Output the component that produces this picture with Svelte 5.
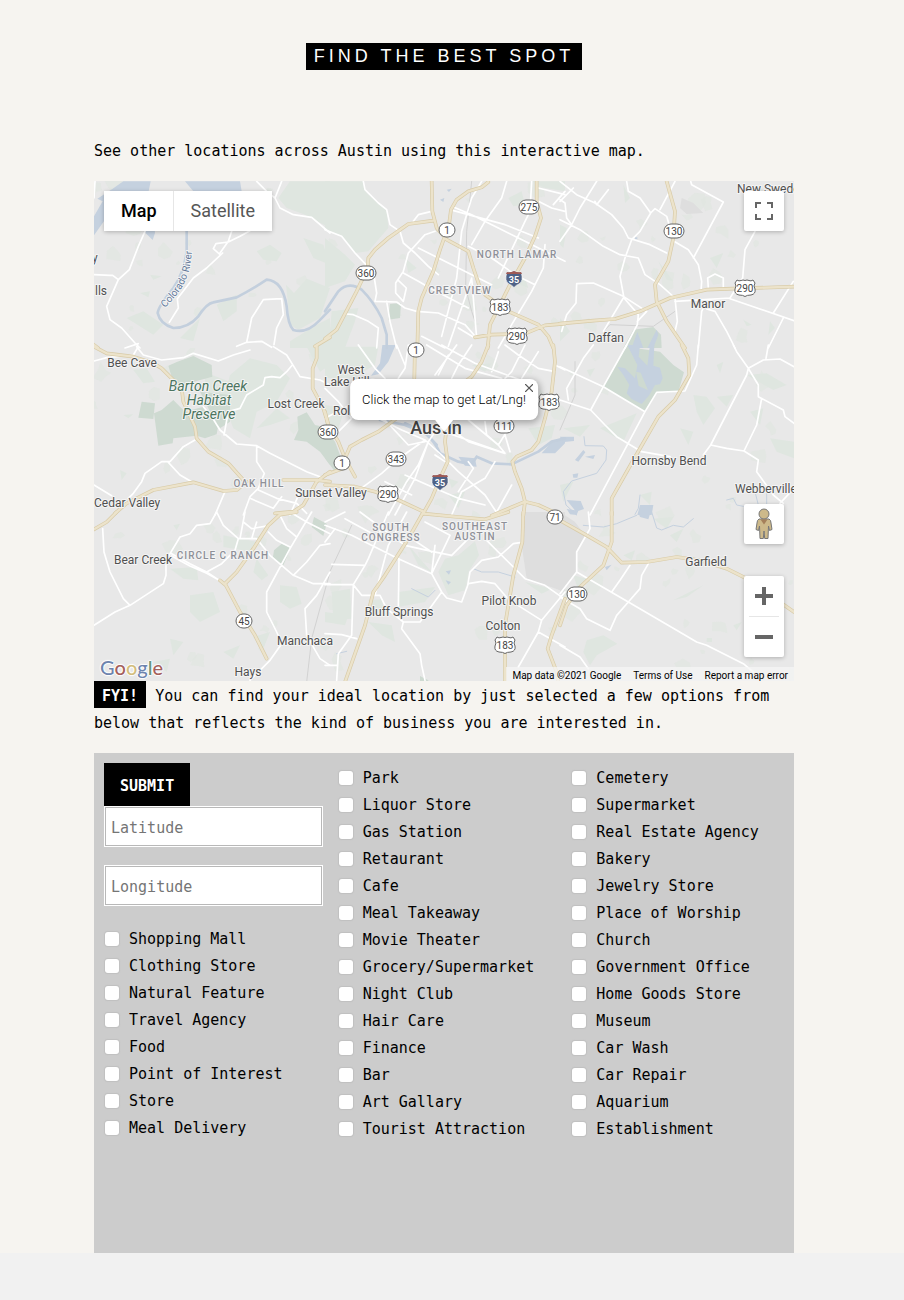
<script>
  // Map geometry, drawn in sectors; each sector has its own origin (3 units per pixel).
  const sectors = [
    {
      x: -12, y: -9,
      pale: 'M565 60L600 10H720V150L640 108L590 90ZM500 220L540 200L575 225L560 250L520 245ZM380 380L440 350L440 400L400 430ZM110 420L160 400L220 440L190 470ZM640 180L700 200L720 260L670 240ZM270 480L330 420L310 490ZM600 490L680 440L720 420V510H600ZM150 345L180 340L175 358ZM180 290L215 295L190 305ZM588 320L612 345L650 302L720 330L690 420L625 455L600 440Z',
      water: 'M12 115L38 70L22 62L68 32L100 10H182L172 60L204 70L188 100L195 165L188 186L160 158L120 118L70 112L45 125L12 172ZM285 10H450L455 40H310Z',
      river: 'M290 160V220Q282 285 250 330Q205 385 203 405Q210 438 250 450Q295 450 325 415Q350 376 370 373L440 358Q490 332 530 305Q578 308 590 385Q594 440 610 456Q650 468 688 428L720 395',
      white: 'M165 160L145 205L118 275L85 305L50 385L60 425L95 450L135 495L150 510M12 290L60 292L68 292L85 305M575 10L555 60M500 10L530 40L555 60L570 90L610 110L665 118L720 165M425 160L415 190L388 228L370 212L378 197L415 192L450 175L480 158M398 225L350 270L310 300L262 362L265 390L238 433M575 362L520 365L485 420L470 493L515 490L545 508M575 362L580 410L560 450L552 500M440 505L470 493M12 60L15 10M105 510L145 497',
      yellow: 'M8 498L24 510M675 505L720 478'
    },
    {
      x: 693, y: -9,
      pale: 'M0 10H115L125 45L185 95L190 150L130 220L90 225L50 175L0 155ZM0 180L60 230L90 260L60 310L0 330ZM240 240L275 270L250 285ZM550 60L590 40L600 80L565 85ZM20 400L100 390L90 430L60 510H10ZM620 10H720V40L660 30ZM560 310L600 300L610 330Z',
      green: 'M195 378L228 375L225 420L190 425Z',
      water: 'M345 65L358 60L355 72ZM365 35L380 32L372 42Z',
      river: 'M0 400L40 340Q70 308 110 335Q145 370 170 420L185 470V510',
      white: 'M115 10L120 35L160 75L185 95L195 140L225 160L235 195L270 225L310 265L340 290M265 130L280 110L320 100M0 155L50 175L90 225L125 262M148 300L155 345L150 370L215 372L240 390L275 400M275 400L340 405L420 440L455 480M330 160L300 170L250 225L235 280L212 315L212 345L235 370L244 330L220 307M235 285L280 310L315 330M280 210L340 240L400 270L500 320M350 475L395 300L410 160L440 60L470 10M370 505L420 360L440 300M440 200L480 130L530 60L545 10M520 300L600 130L615 100L620 10M380 85L440 110L520 150L600 190L720 250M430 205L500 240L570 290L630 320M660 200L655 270L620 340L560 440L520 510M640 70L680 90L720 100M640 30L720 50M685 80L720 40M375 95L460 118L540 140L640 180M185 370L195 430L215 510M65 408L85 410L130 430L160 450L155 510M290 475L360 510M400 450L450 480M440 300L455 480M315 330L430 390',
      yellow: 'M320 10L322 100L335 150L365 185L430 220L445 270L462 320L480 350L550 400L640 440L670 475L685 510M490 12L470 28L430 40L395 65L378 95L372 140L345 215L325 280L290 360L280 400L277 510M325 128L250 138L190 180L150 215L130 240L128 270L95 340L35 455L0 482M635 10L635 70L648 120L630 175L600 240L555 320L510 410L495 440L488 510M450 478L500 470L600 467L660 442L720 437',
      rail: 'M440 10L425 160L422 330L440 400L450 430'
    },
    {
      x: 1398, y: -9,
      pale: 'M190 20L210 60L195 75ZM295 250L340 310L320 305ZM450 240L490 225L470 270ZM0 140L20 150L10 210L0 200ZM550 425L575 440L560 445ZM0 420L30 460L0 490ZM630 430L645 450L625 470Z',
      green: 'M220 455L280 447L303 470L305 510H190Z',
      water: 'M232 462L250 510H215ZM290 455L295 470L280 510H262Z M225 178H232V184H225Z',
      white: 'M0 10L50 50L105 75L155 110L190 150L205 180L270 200L320 225M110 10L60 90L35 140L0 190M0 125L60 155L130 205L180 230L235 240L255 290L300 320L345 360L352 430L345 460M0 65L15 75L20 120L35 140M200 10L205 40L240 60L272 105L240 160L215 185L195 240L180 295L192 360L235 410L232 440L195 510M145 35L110 80L105 70M345 10L300 95M40 30L0 70M272 105L285 92L320 115L342 190L385 215L415 260L425 310L423 340M400 240L490 72L395 20L392 10M445 330L443 300L465 288L490 300L490 330M585 160L555 215L548 300L510 360L345 370M510 362L702 428M700 310L640 405M670 420L625 510M440 370L425 400L415 510M440 393L465 400L500 460L525 510M50 317L100 315L190 355L260 400L232 430M50 317L48 375L20 410L5 460M190 360L130 460',
      yellow: 'M320 10L345 100L340 180L325 250L285 320L290 370L320 430L375 510M0 437L100 428L165 423L240 400L330 360L440 335L520 332L702 326',
      rail: 'M130 460L150 440L280 445L345 400',
      gray: 'M365 60L400 75L430 105L380 108L360 90Z'
    },
    {
      x: -12, y: 492,
      pale: 'M130 75L170 70L195 110L160 115ZM420 90L480 40L560 60L600 100L560 170L500 200L480 280L430 250L400 170ZM90 375L110 385L95 405ZM100 210L130 208L115 220ZM340 80L420 110L450 150L410 190L360 180ZM650 5L720 5V60L690 80Z M500 250L560 190L600 220L540 240Z',
      green: 'M192 205L215 195L250 165L285 200L340 185L385 240L380 268L345 280L320 272L250 280L248 295L205 302ZM155 170L195 175L190 222L145 218ZM235 62L262 50L310 33L365 60L367 95L320 108L270 128L245 95ZM330 140L420 150L420 230L390 250L360 200ZM622 215L650 202L675 240L720 250V360L690 320L650 290L612 285L625 255Z',
      white: 'M12 48L50 38L130 30L145 5M140 5L160 30L215 45L280 38L310 25L385 48L430 30L480 15M550 5L590 30L615 70L630 95L690 105L720 120M605 62L590 80L570 98L545 95L525 98L520 120L470 150L450 190L415 200L402 270M340 185L365 215L390 255L440 297L500 302L540 325L650 380L690 395M500 302L500 350L523 385L505 430L480 455L460 510M315 285L280 305L240 350L215 350L165 385L155 410L130 445L115 460M235 352L270 390L305 410M12 420L65 452M405 440L375 510M505 435L560 460L620 475L650 505M480 460L550 490L575 455M630 440L600 510',
      yellow: 'M12 5L50 25L130 35L190 55L215 70L275 130L280 170L315 245L320 280L355 320L415 355L460 405M75 505L110 475L190 435L310 412L400 438L440 435L470 410M580 405L680 405L720 410M720 380L680 410L640 480L610 500L555 505M680 5L680 40L668 70L668 130L700 190L715 240'
    },
    {
      x: 693, y: 492,
      pale: 'M0 5L160 5L150 60L80 100L0 100ZM0 180L60 190L40 250L0 270ZM440 60L500 55L480 80ZM370 400L400 410L380 430ZM610 250L690 240L680 280L640 300ZM370 450L420 440L400 490Z',
      green: 'M0 250L30 290L60 370L30 380L0 340Z',
      water: 'M172 0H212L190 50L160 88L138 92L165 55ZM400 335L450 340L455 365L420 362ZM650 325L680 290L720 282V295L690 325Z',
      river: 'M165 225L240 240L300 265Q330 290 345 325L400 350L440 358L455 335M455 335L500 355L560 358L640 320L680 290L720 280M240 235L300 262L335 300',
      white: 'M350 0L395 25L450 55L600 110M305 0L420 70L530 100M395 0L330 90M440 0L400 60L380 100M540 0L580 30L640 70L690 80M600 0L560 80L540 100M250 0L240 70L220 100M640 20L590 100M215 0L240 60M690 60L720 75M160 220L230 255L300 285L350 330L400 380L480 450L520 510M375 250L430 290L540 325M480 230L485 270L520 300L540 325M540 270L555 320M370 265L540 325M430 225L520 300L545 260M340 245L310 290L280 360L245 410L190 510M300 285L215 345L170 385L95 440M310 290L270 400L210 510M240 390L330 430L400 460L480 480M510 350L480 400L410 440L380 510M360 350L330 330M430 350L445 370L400 440M560 420L510 510M180 410L260 450M0 130L40 170L80 220L20 280M100 0L150 70L180 100M0 220L75 180M180 225L250 300L300 290M340 90L370 30M500 80L520 20',
      yellow: 'M270 0L268 100M490 0L470 50L440 95L420 110M685 0L690 50L680 140L660 220L640 290L620 315L575 335L562 350L570 380L590 430L600 470L595 510M215 220L160 260L110 285L75 305L60 340M60 340L55 370L0 390M0 420L90 425L150 440L220 465L295 500M0 200L10 240L40 290L60 340L90 395M365 245L360 290L368 350L345 400L320 460L295 505M500 512L600 470L640 480L705 510'
    },
    {
      x: 1398, y: 492,
      pale: 'M400 150L440 155L465 190L430 240L410 200ZM470 155L520 150L500 185ZM560 90L620 85L680 120L640 135ZM570 200L610 190L600 240ZM630 280L702 290V340L650 320ZM360 250L400 260L385 300ZM10 250L90 240L60 275ZM470 60L490 50L480 85ZM80 75L105 70L90 95ZM240 450L275 440L270 480ZM0 420L40 410L10 470ZM120 250L230 205L190 290Z',
      green: 'M200 5L300 20L340 60L372 82L355 140L290 145L255 200L130 125L190 20Z',
      water: 'M202 0H240L236 35L262 62L270 0H283L280 62L300 68L308 100L300 118L285 120L268 150L245 177L215 162L200 145L208 120L190 90L172 65L195 70L225 100L232 60ZM20 465L62 468L72 492L48 500ZM0 275H42V288L5 292ZM45 345L70 315L76 322L55 350ZM240 480H280L275 510H232ZM38 388L55 385L52 398L40 398ZM75 335L105 330L100 342ZM20 492L55 497L50 510L30 508Z',
      river2: 'M72 275L75 302L130 303L140 315L138 345L110 385L35 408L10 440L18 480L50 510M240 450L235 490L225 508M500 465L520 460L530 480L550 484M585 440L595 480L620 482V440',
      white: 'M415 0L410 60L375 138L290 142L255 200L90 510M0 65L130 125L255 200M200 0L130 125L92 195M0 165L92 195L135 240L170 275L245 320L330 335M430 330L452 300L560 90L565 70L530 20L520 0M565 70L595 120L595 155L670 195L675 215L702 235M565 70L610 45L660 42L702 65M625 0L618 40M605 160L590 240L552 318L500 310L452 300M552 318L595 345L590 380L640 450L670 475M660 475L702 430M100 0L70 40L20 130L25 165',
      yellow: 'M365 0L385 40L388 90L345 165L295 215L220 345L155 460L155 510',
      rail: 'M45 50L45 150L0 255'
    },
    {
      x: -12, y: 993,
      pale: 'M240 170L320 165L325 205L280 200ZM250 40L270 35L260 55ZM400 70L500 90L490 120L400 105ZM500 140L535 190L515 205L490 180ZM400 420L450 400L430 440ZM300 250L370 240L390 300L330 330L300 300ZM570 220L620 225L635 275L600 290L570 270ZM240 380L280 390L250 430ZM190 450L240 440L230 480ZM490 375L540 360L520 410Z',
      green: 'M552 115L575 95L602 108L580 160L548 140ZM665 45L672 15L710 35L700 72Z',
      white: 'M38 50L42 120L60 180L100 260L120 280L75 300L12 340M120 280L220 215L228 190L228 145L270 75L300 65L320 40L360 35L380 0M245 125L300 155L350 180L388 205M245 132L300 162L350 184L388 205M380 0L400 40L445 80L500 80L540 130L610 190L670 215L720 215M445 80L435 115L395 155L350 180M465 0L450 80M460 30L485 50L540 40M500 30L485 80M665 0L600 110L530 240L530 300L560 360L575 395L540 445L480 505M720 95L690 100L650 150L610 190M720 180L680 250L645 290L650 370L690 440L720 460M570 10L590 50L620 75M535 60L560 85L600 105M600 0L650 30L720 65',
      yellow: 'M12 52L50 30L80 0M620 0L570 8L535 40L490 110L440 180L405 215L450 300L470 330L495 370L530 440M390 205L405 218',
      rail: 'M720 180L665 380L650 510'
    },
    {
      x: 693, y: 993,
      gray: 'M600 0H720V240L650 215L605 200L590 100Z',
      pale: 'M250 100L320 180L280 160ZM130 330L200 340L210 390L170 370ZM0 300L70 310L60 340L0 330ZM600 210L680 230L650 245ZM130 265L170 262L180 310L140 300ZM220 240L330 225L300 270L220 285ZM360 140L400 130L450 88L462 130L430 180L420 235L370 250L340 180ZM20 240L75 230L80 320L25 325Z',
      green: 'M285 492L310 505V515H285Z',
      water: 'M362 178L378 175L372 188ZM362 205L378 210L370 218Z',
      river2: 'M445 170L470 180L520 180L570 195M260 230L310 255L330 235M35 425L65 418',
      white: 'M0 40L80 70L220 140L320 185L350 240L365 258L410 270L430 215L470 208L510 215L550 262L650 325L640 360L580 465M650 325L720 240M640 360L720 405M0 90L30 50M105 0L240 100L320 118L380 130L430 80M60 20L170 80M330 100L320 185L375 70L300 30M245 0L190 100L150 250M190 0L130 140L120 160L20 157M120 160L85 218L0 218M85 218L80 370L40 425L35 505M85 218L110 250L165 250L185 290L235 330L285 330L350 240M222 140L220 290M235 330L230 350L285 425L290 460L300 505M585 92L565 95L520 135L470 145L435 180L428 220M485 85L600 200L660 220L720 262M0 460L35 460M0 365L50 368L95 380M0 30L60 0M260 80L320 120',
      yellow: 'M295 0L250 80L180 190L145 240L120 340L60 510M295 5L400 15L480 22L550 0M595 0L592 90L565 190L540 340L540 510M720 260L680 370L668 410L695 480L700 510',
      rail: 'M0 210L80 40'
    },
    {
      x: 1398, y: 993,
      gray: 'M0 0L45 30L75 70L48 120L50 180L0 240Z',
      pale: 'M190 130L225 115L215 145ZM340 265L430 220L380 255ZM80 385L130 370L172 395L110 430L90 460L70 420ZM440 378H456V390H440ZM520 340L545 330L530 355ZM330 70L370 50L350 90ZM40 190L80 200L60 250ZM280 20L340 15L320 50Z',
      water: 'M235 0H272L265 22L240 15ZM135 165L155 158L140 175Z',
      river2: 'M70 40L130 45L170 35L230 10M275 0L290 48L305 54L340 40L370 45L400 20',
      white: 'M85 0L90 50L50 120L50 180L0 245M50 180L205 270L350 355L410 390L440 400L550 455L580 480M210 160L180 205L155 240M265 155L245 190L240 230L205 270L170 310L150 355L80 320L60 290L0 255M0 400L60 435L85 470',
      yellow: 'M0 25L80 70L140 105L185 152L260 150L350 135L420 145L500 170L560 200L702 300M155 0L155 90L130 160L60 225L20 280L0 340'
    }
  ];

  // Scattered vegetation patches.
  let seed = 11;
  const rnd = () => (seed = (seed * 16807) % 2147483647) / 2147483647;
  const patches = Array.from({ length: 170 }, () => {
    const x = Math.round(rnd() * 2100);
    const y = Math.round(rnd() * 1500);
    const r = 8 + rnd() * 24;
    const pts = Array.from({ length: 7 }, (_, i) => {
      const a = (i / 7) * Math.PI * 2;
      const d = r * (0.35 + rnd() * 0.9);
      return `${Math.round(x + Math.cos(a) * d)},${Math.round(y + Math.sin(a) * d)}`;
    });
    return pts.join(' ');
  });

  const places = [
    ['New Swede', 737, 193, 'start'], ['y', 92, 262, 'start'], ['lls', 95, 295, 'start'],
    ['Manor', 708, 308], ['Daffan', 606, 342], ['Bee Cave', 132, 367], ['West', 351, 374],
    ['Lake Hills', 324, 386, 'start'], ['Lost Creek', 296, 408], ['Rollingwood', 333, 415, 'start'],
    ['Hornsby Bend', 669, 465], ['Webberville', 735, 493, 'start'], ['Cedar Valley', 94, 507, 'start'],
    ['Sunset Valley', 331, 497], ['Bear Creek', 143, 564], ['Garfield', 706, 566],
    ['Pilot Knob', 509, 605], ['Colton', 503, 630], ['Bluff Springs', 399, 616],
    ['Manchaca', 305, 645], ['Hays', 248, 676]
  ];
  const districts = [
    ['NORTH LAMAR', 517, 258], ['CRESTVIEW', 460, 294], ['OAK HILL', 259, 487],
    ['CIRCLE C RANCH', 223, 559], ['SOUTH', 391, 531], ['CONGRESS', 391, 541],
    ['SOUTHEAST', 475, 530], ['AUSTIN', 475, 540]
  ];
  const stateShields = [
    ['275', 529, 207], ['1', 447, 230], ['130', 674, 231], ['360', 366, 273], ['1', 416, 350],
    ['360', 328, 432], ['1', 342, 463], ['343', 396, 459], ['111', 504, 426], ['71', 555, 517],
    ['130', 577, 594], ['45', 244, 621]
  ];
  const usShields = [
    ['183', 500, 307], ['290', 517, 336], ['290', 745, 288], ['183', 549, 402],
    ['290', 388, 494], ['183', 505, 645]
  ];
  const interstates = [[514, 279], [440, 482]];

  const columns = [
    ['Shopping Mall', 'Clothing Store', 'Natural Feature', 'Travel Agency', 'Food', 'Point of Interest', 'Store', 'Meal Delivery'],
    ['Park', 'Liquor Store', 'Gas Station', 'Retaurant', 'Cafe', 'Meal Takeaway', 'Movie Theater', 'Grocery/Supermarket', 'Night Club', 'Hair Care', 'Finance', 'Bar', 'Art Gallary', 'Tourist Attraction'],
    ['Cemetery', 'Supermarket', 'Real Estate Agency', 'Bakery', 'Jewelry Store', 'Place of Worship', 'Church', 'Government Office', 'Home Goods Store', 'Museum', 'Car Wash', 'Car Repair', 'Aquarium', 'Establishment']
  ];
</script>

{#snippet layer(key)}
  <g class={key}>
    {#each sectors as s}
      {#if s[key]}<path d={s[key]} transform={`translate(${s.x} ${s.y})`} />{/if}
    {/each}
  </g>
{/snippet}

{#snippet options(list)}
  {#each list as name}
    <label class="option"><input type="checkbox" {name} />{name}</label>
  {/each}
{/snippet}

<main>
  <div class="content">
    <h1><span>FIND THE BEST SPOT</span></h1>

    <p>See other locations across Austin using this interactive map.</p>

    <div class="map">
      <svg class="canvas" viewBox="0 0 2100 1500" preserveAspectRatio="xMidYMid slice" role="img" aria-label="Austin">
        <rect width="2100" height="1500" fill="#e8e8e8" />
        <g class="pale">
          {#each patches as points}<polygon {points} opacity="0.6" />{/each}
        </g>
        {@render layer('gray')}
        {@render layer('pale')}
        {@render layer('green')}
        {@render layer('water')}
        <path class="isle" d="M1626 572L1640 575L1662 628L1634 615Z" />
        {@render layer('river')}
        {@render layer('river2')}
        {@render layer('rail')}
        {@render layer('white')}
        <g class="casing">
          {#each sectors as s}<path d={s.yellow} transform={`translate(${s.x} ${s.y})`} />{/each}
        </g>
        {@render layer('yellow')}

        <g transform="scale(3) translate(-94 -181)">
          <g class="place">
            {#each places as [name, x, y, anchor]}
              <text {x} {y} text-anchor={anchor ?? 'middle'}>{name}</text>
            {/each}
          </g>
          <g class="district">
            {#each districts as [name, x, y]}<text {x} {y}>{name}</text>{/each}
          </g>
          <g class="preserve">
            <text x="208" y="391">Barton Creek</text>
            <text x="209" y="405">Habitat</text>
            <text x="209" y="419">Preserve</text>
          </g>
          <text class="city" x="436" y="434">Austin</text>
          <path id="river-label" d="M165 308C178 294 191 282 192 248" fill="none" />
          <text class="river-name"><textPath href="#river-label">Colorado River</textPath></text>

          {#each stateShields as [n, x, y]}
            {@const w = n.length === 3 ? 20 : 16}
            <rect class="shield" x={x - w / 2} y={y - 7} width={w} height="14" rx="7" />
            <text class="num" {x} y={y + 4}>{n}</text>
          {/each}
          {#each usShields as [n, x, y]}
            <path class="shield" transform={`translate(${x} ${y})`} d="M-8 -8Q-6 -6.500 -4 -7.500Q-2 -8.500 0 -7.500Q2 -8.500 4 -7.500Q6 -6.500 8 -8L10 -5Q8 -2 10 1Q11 6 6 7Q2 7 0 8.500Q-2 7 -6 7Q-11 6 -10 1Q-8 -2 -10 -5Z" />
            <text class="num" {x} y={y + 4}>{n}</text>
          {/each}
          {#each interstates as [x, y]}
            <g transform={`translate(${x} ${y})`}>
              <path fill="#4f6286" stroke="#fff" stroke-width="0.6" d="M-7 -7Q-4 -6 0 -8Q4 -6 7 -7Q10 2 5 5Q2 6 0 8.500Q-2 6 -5 5Q-10 2 -7 -7Z" />
              <path fill="#a05a54" d="M-7 -7Q-4 -6 0 -8Q4 -6 7 -7L8 -5H-8Z" />
              <text class="inter" x="0" y="4">35</text>
            </g>
          {/each}
        </g>
      </svg>

      <div class="types">
        <button type="button" class="on">Map</button>
        <button type="button">Satellite</button>
      </div>

      <button type="button" class="control full" aria-label="Toggle fullscreen view">
        <svg width="18" height="18" viewBox="0 0 18 18"><path fill="#666" d="M0 0V6H2V2H6V0ZM12 0V2H16V6H18V0ZM16 12V16H12V18H18V12ZM2 12H0V18H6V16H2Z" /></svg>
      </button>

      <div class="stack">
        <button type="button" class="control" aria-label="Street View">
          <svg width="20" height="32" viewBox="0 0 20 32">
            <g fill="#cdb98a" stroke="#777" stroke-width="1">
              <path d="M5 11Q3 12 3 15L2 21.500L4.500 22.500L5.500 18L6 30.500H9.300L10 23L10.700 30.500H14L14.500 18L15.500 22.500L18 21.500L17 15Q17 12 15 11Z" />
              <circle cx="10" cy="6" r="5" />
            </g>
            <path fill="#a5805a" d="M6.500 11.500H13.500L10 16.500Z" />
          </svg>
        </button>
        <div class="zoom">
          <button type="button" aria-label="Zoom in"><svg width="18" height="18" viewBox="0 0 18 18"><path fill="#666" d="M7 0H11V7H18V11H11V18H7V11H0V7H7Z" /></svg></button>
          <button type="button" aria-label="Zoom out"><svg width="18" height="18" viewBox="0 0 18 18"><path fill="#666" d="M0 7H18V11H0Z" /></svg></button>
        </div>
      </div>

      <div class="info">
        Click the map to get Lat/Lng!
        <button type="button" aria-label="Close"><svg width="8" height="8" viewBox="0 0 8 8"><path d="M0 0L8 8M8 0L0 8" stroke="#555" stroke-width="1.200" /></svg></button>
      </div>

      <div class="logo"><span class="b">G</span><span class="r">o</span><span class="y">o</span><span class="b">g</span><span class="g">l</span><span class="r">e</span></div>

      <div class="credits">
        <span>Map data ©2021 Google</span>
        <a href="#terms">Terms of Use</a>
        <a href="#report">Report a map error</a>
      </div>
    </div>

    <p class="note"><span class="tag">FYI!</span> You can find your ideal location by just selected a few options from below that reflects the kind of business you are interested in.</p>

    <form onsubmit={(e) => e.preventDefault()}>
      <div>
        <button class="submit">SUBMIT</button>
        <input class="field" type="text" placeholder="Latitude" aria-label="Latitude" />
        <input class="field" type="text" placeholder="Longitude" aria-label="Longitude" />
        {@render options(columns[0])}
      </div>
      <div>{@render options(columns[1])}</div>
      <div>{@render options(columns[2])}</div>
    </form>
  </div>
</main>

<style>
  :global(body) { background: #f1f1f1; }
  main {
    padding: 43px 16px 0 0;
    background: #f6f4f0;
    color: #000;
    font: 15px/27px "DejaVu Sans Mono", "Liberation Mono", monospace;
  }
  .content { max-width: 700px; margin: 0 auto; }
  h1 {
    margin: 0 0 68px;
    text-align: center;
    font: 400 18px/27px "Liberation Sans", Arial, sans-serif;
    letter-spacing: 4px;
  }
  h1 span { display: inline-block; padding: 0 8px; background: #000; color: #fff; }
  .tag { padding: 7px 8px 3px; background: #000; color: #fff; font-weight: 700; }
  p { margin: 0 0 16px; }
  .note { padding-top: 2px; }

  button { border: 0; padding: 0; cursor: pointer; }
  .map { position: relative; height: 500px; overflow: hidden; font-family: Roboto, sans-serif; }
  .canvas { display: block; width: 100%; height: 100%; }
  .gray path { fill: #dedede; }
  .pale { fill: #dfe6e0; }
  .green { fill: #cedad1; }
  .isle { fill: #cedad1; }
  .water { fill: #c5d1df; }
  .river, .river2, .rail, .white, .yellow, .casing { fill: none; stroke-linejoin: round; stroke-linecap: round; }
  .river { stroke: #c3cfdd; stroke-width: 8; }
  .river2 { stroke: #c5d1df; stroke-width: 3; }
  .rail { stroke: #d2d2d2; stroke-width: 3; }
  .white { stroke: #fff; stroke-width: 5; }
  .casing { stroke: #d8cba8; stroke-width: 11; }
  .yellow { stroke: #ece3cb; stroke-width: 7; }
  .canvas text { paint-order: stroke; stroke: #f4f4f4; stroke-width: 2px; stroke-linejoin: round; }
  .place { font-size: 12px; fill: #505050; }
  .district { font-size: 10px; font-weight: 500; letter-spacing: 1px; fill: #8e9098; text-anchor: middle; }
  .preserve { font-size: 14px; font-style: italic; fill: #4c7460; text-anchor: middle; }
  .city { font-size: 18px; font-weight: 500; fill: #444; text-anchor: middle; }
  .river-name { font-size: 10px; fill: #61789a; }
  .shield { fill: #fff; stroke: #666; stroke-width: 1; }
  .canvas .num { font-size: 10px; fill: #444; text-anchor: middle; stroke: none; }
  .canvas .inter { font-size: 9px; font-weight: 700; fill: #fff; text-anchor: middle; stroke: none; }

  .types { position: absolute; top: 10px; left: 10px; display: flex; box-shadow: 0 1px 4px rgba(0, 0, 0, 0.25); border-radius: 2px; }
  .types button { height: 40px; padding: 0 17px 1px; background: #fff; color: #565656; font: 18px Roboto, sans-serif; }
  .types .on { padding-right: 16px; border-right: 1px solid #e6e6e6; color: #000; font-weight: 500; }
  .control {
    display: grid; place-items: center; width: 40px; height: 40px;
    background: #fff; border-radius: 2px; box-shadow: 0 1px 4px rgba(0, 0, 0, 0.25);
  }
  .full { position: absolute; top: 10px; right: 10px; }
  .stack { position: absolute; right: 10px; bottom: 24px; display: grid; gap: 32px; }
  .zoom { width: 40px; background: #fff; border-radius: 2px; box-shadow: 0 1px 4px rgba(0, 0, 0, 0.25); }
  .zoom button { display: grid; place-items: center; width: 30px; height: 40px; margin: 0 5px; background: none; }
  .zoom button + button { border-top: 1px solid #e6e6e6; height: 41px; }
  .info {
    position: absolute; top: 198px; left: 50%; translate: -50% 0;
    padding: 0 12px; border-radius: 8px; background: #fff; white-space: nowrap;
    font-size: 13px; font-weight: 300; line-height: 41px;
    box-shadow: 0 2px 7px 1px rgba(0, 0, 0, 0.3);
  }
  .info::after {
    content: ""; position: absolute; top: 100%; left: 50%; translate: -50% 0;
    border: 9px solid transparent; border-top: 12px solid #fff; border-bottom: 0;
  }
  .info button { position: absolute; top: 5px; right: 5px; display: grid; background: none; }
  .logo {
    position: absolute; left: 6px; bottom: 1px; font: 500 20px/26px Lato, sans-serif;
    text-shadow: 1px 0 1px #fff, -1px 0 1px #fff, 0 1px 1px #fff, 0 -1px 1px #fff;
  }
  .logo .b { color: #6d84ae; }
  .logo .r { color: #a4605c; }
  .logo .y { color: #d3bd7c; }
  .logo .g { color: #6a9477; }
  .credits {
    position: absolute; right: 0; bottom: 0; display: flex; padding-top: 3px;
    background: rgba(245, 245, 245, 0.75); font-size: 10px; line-height: 11px;
  }
  .credits > * { padding: 0 6px; color: #000; text-decoration: none; white-space: nowrap; }

  form {
    display: grid; grid-template-columns: repeat(3, minmax(0, 1fr)); gap: 15px;
    min-height: 500px; box-sizing: border-box; padding: 10px 4px 10px 10px; background: #ccc;
  }
  .submit { display: block; height: 43px; padding: 3px 16px 0; background: #000; color: #fff; font: inherit; font-weight: 700; }
  .field {
    display: block; box-sizing: border-box; width: 100%; height: 41px; margin: 0 0 18px; padding: 2px 6px 0;
    border: 1px solid #fff; border-radius: 0; background: #fff; box-shadow: inset 0 0 0 1px #b8b8b8; font: inherit;
  }
  .field::placeholder { color: #757575; }
  .option { display: flex; align-items: center; gap: 10px; box-sizing: border-box; height: 27px; padding-top: 4px; white-space: nowrap; }
  .option input {
    appearance: none; width: 14px; height: 14px; margin: 0 0 2px 1px; border-radius: 3px;
    background: #fff; box-shadow: 0 0 1px 1px #c0c0c0;
  }
  .option input:checked { background: #4a78c8; }
</style>
